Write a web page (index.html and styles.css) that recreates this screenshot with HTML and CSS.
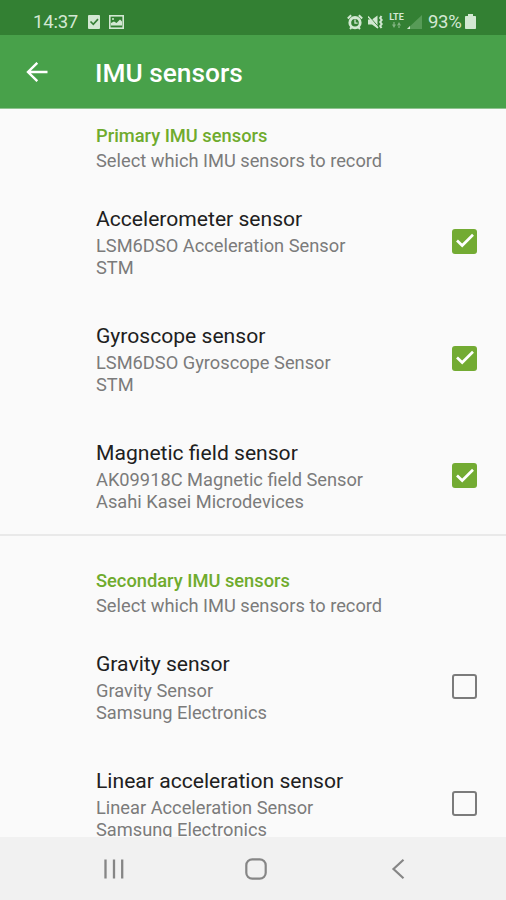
FILE: index.html
```html
<!DOCTYPE html>
<html lang="en">
<head>
<meta charset="utf-8">
<title>IMU sensors</title>
<link rel="stylesheet" href="styles.css">
</head>
<body>
<div class="screen">
  <div class="status">
    <span class="clock">14:37</span>
    <svg class="st-check" width="12" height="14" viewBox="0 0 12 14"><rect width="12" height="14" rx="1" fill="#d3e8d3"/><path d="M2.500 6.500l2.800 2.800L10 4.200" fill="none" stroke="#388038" stroke-width="1.700"/></svg>
    <svg class="st-pic" width="15" height="14" viewBox="0 0 15 14"><rect x=".8" y=".8" width="13.400" height="12.400" fill="none" stroke="#d3e8d3" stroke-width="1.600"/><path d="M2 10.500V8l3-1.500 2.500 1.500L11 4.500l2 2v4z" fill="#d3e8d3"/><circle cx="4" cy="4" r="1" fill="#d3e8d3"/></svg>
    <div class="status-right">
      <svg width="16" height="16" viewBox="0 0 16 16" fill="none" stroke="#d3e8d3"><circle cx="8" cy="8.700" r="5.200" stroke-width="2.800"/><path d="M8 5.500v3.700h2.600" stroke-width="1.300"/><path d="M.8 4.500L4.200 1.300M15.200 4.500L11.800 1.300M3 15l1.800-2M13 15l-1.800-2" stroke-width="2"/></svg>
      <svg class="st-mute" width="16" height="16" viewBox="0 0 16 16"><path d="M0 5.500h4L9.500 1.500v13L4 10.500H0z" fill="#d3e8d3"/><path d="M.8 1.800l10 11.500" stroke="#338033" stroke-width="1"/><path d="M0 2.500l10 11.500" stroke="#d3e8d3" stroke-width="1.400"/><path d="M13.500 2l-1.300 2 1.500 2-1.500 2 1.500 2-1.500 2 1.300 2" fill="none" stroke="#d3e8d3" stroke-width="2"/></svg>
      <span class="lte"><b>LTE</b><svg width="10" height="6" viewBox="0 0 10 6" fill="#82b482"><path d="M0 2.500h4L2 6zM1.400 0h1.200v3H1.400zM5 3.500h4L7 0zM6.400 3h1.200v3H6.400z"/></svg></span>
      <svg class="st-signal" width="15" height="14" viewBox="0 0 15 14"><path d="M0 14L15 0v14z" fill="#579b57"/><path d="M0 14l3-3v3z" fill="#d3e8d3"/></svg>
      <span class="percent">93%</span>
      <svg class="st-bat" width="11" height="15" viewBox="0 0 11 15"><path d="M3 0h5v2h2.200q.8 0 .8.8v11.400q0 .8-.8.8H.8q-.8 0-.8-.8V2.800q0-.8.8-.8H3z" fill="#d3e8d3"/></svg>
    </div>
  </div>
  <header class="bar">
    <svg width="22" height="20" viewBox="0 0 22 20" fill="none" stroke="#fff" stroke-width="2.400"><path d="M21.500 10H2M11.300 .8L2 10l9.300 9.200"/></svg>
    <h1>IMU sensors</h1>
  </header>
  <main>
    <section>
      <div class="head"><h2>Primary IMU sensors</h2><p>Select which IMU sensors to record</p></div>
      <div class="row"><div><h3>Accelerometer sensor</h3><p>LSM6DSO Acceleration Sensor<br>STM</p></div><span class="box on"><svg width="24" height="24" viewBox="0 0 24 24"><path d="M4 11.500l5.200 5L20 5.800" fill="none" stroke="#fff" stroke-width="2.700"/></svg></span></div>
      <div class="row"><div><h3>Gyroscope sensor</h3><p>LSM6DSO Gyroscope Sensor<br>STM</p></div><span class="box on"><svg width="24" height="24" viewBox="0 0 24 24"><path d="M4 11.500l5.200 5L20 5.800" fill="none" stroke="#fff" stroke-width="2.700"/></svg></span></div>
      <div class="row"><div><h3>Magnetic field sensor</h3><p>AK09918C Magnetic field Sensor<br>Asahi Kasei Microdevices</p></div><span class="box on"><svg width="24" height="24" viewBox="0 0 24 24"><path d="M4 11.500l5.200 5L20 5.800" fill="none" stroke="#fff" stroke-width="2.700"/></svg></span></div>
    </section>
    <section class="secondary">
      <div class="head"><h2>Secondary IMU sensors</h2><p>Select which IMU sensors to record</p></div>
      <div class="row"><div><h3>Gravity sensor</h3><p>Gravity Sensor<br>Samsung Electronics</p></div><span class="box"></span></div>
      <div class="row"><div><h3>Linear acceleration sensor</h3><p>Linear Acceleration Sensor<br>Samsung Electronics</p></div><span class="box"></span></div>
    </section>
  </main>
  <nav>
    <svg width="22" height="22" viewBox="0 0 22 22" stroke="#868686" stroke-width="2.300"><path d="M2.500 1.500v19M11 1.500v19M19.200 1.500v19"/></svg>
    <svg width="22" height="22" viewBox="0 0 22 22"><rect x="1.300" y="1.300" width="19.400" height="19.400" rx="6" fill="none" stroke="#868686" stroke-width="2.200"/></svg>
    <svg width="22" height="22" viewBox="0 0 22 22"><path d="M16.500 1.700L6.500 11l10 9.300" fill="none" stroke="#868686" stroke-width="2.200"/></svg>
  </nav>
</div>
</body>
</html>
```
FILE: styles.css
```css
* { box-sizing: border-box; }
body, h1, h2, h3, p { margin: 0; }
body { font-family: Roboto, "Liberation Sans", sans-serif; background: #fafafa; }
svg { display: block; flex: none; }
.screen { width: 506px; height: 900px; display: flex; flex-direction: column; overflow: hidden; }
.status { height: 35px; flex: none; display: flex; align-items: center; padding: 8px 30px 0 33px; background: #338033; color: #d3e8d3; font-size: 18.500px; }
.clock { width: 55px; letter-spacing: -.2px; }
.st-pic { margin-left: 9px; }
.status-right { margin-left: auto; display: flex; align-items: center; }
.st-mute { margin-left: 5px; }
.lte { margin-left: 5px; width: 15px; display: flex; flex-direction: column; align-items: center; padding-bottom: 2px; }
.lte b { font-size: 9px; line-height: 9px; }
.st-signal { margin-left: 3px; }
.percent { margin-left: 6px; width: 36px; letter-spacing: -.3px; }
.st-bat { margin-left: 1px; }
.bar { height: 74px; flex: none; display: flex; align-items: center; padding: 1px 0 0 26px; background: #48a14a; color: #fff; border-bottom: 1px solid #8fc390; }
.bar h1 { margin-left: 47px; padding-top: 3px; font-size: 26.300px; font-weight: 500; line-height: 31px; }
main { flex: 1; min-height: 0; overflow: hidden; }
.head { height: 73.600px; padding: 16px 0 0 96px; }
.head h2 { font-size: 18.300px; line-height: 22px; font-weight: 500; color: #6fab2d; }
.head p { margin-top: 3px; }
p { font-size: 18.250px; line-height: 21.600px; color: #7b7b7b; }
.row { height: 117.200px; display: flex; align-items: center; justify-content: space-between; padding: 0 29px 0 96px; }
h3 { font-size: 21.100px; line-height: 25px; font-weight: 400; color: #202020; margin-bottom: 4px; }
.row p { margin-bottom: -2px; }
.box { width: 25px; height: 25px; border: 2.500px solid #7b7b7b; border-radius: 3px; display: grid; place-items: center; }
.box.on { background: #73ab33; border: 0; }
.secondary { border-top: 2px solid #e9e9e9; padding-top: 18px; }
nav { height: 63px; flex: none; display: flex; justify-content: space-between; align-items: center; padding: 1px 97px 0 103px; background: #f1f1f1; }
```
